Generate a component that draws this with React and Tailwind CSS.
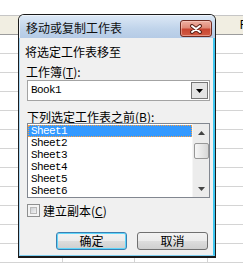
export default function App() {
  const letters = ["", "", "", "F"];
  const rows = Array.from({ length: 12 }, (_, i) => i);
  const sheets = ["Sheet1", "Sheet2", "Sheet3", "Sheet4", "Sheet5", "Sheet6"];
  return (
    <div className="relative w-[243px] h-[266px] overflow-hidden bg-white font-['Noto_Sans_CJK_SC',sans-serif] text-black">
      {/* spreadsheet background */}
      <div className="h-[15px]" />
      <div className="grid grid-cols-[63px_72px_73px_72px] h-[20px] border-y border-t-[#c6c6c6] border-b-[#9c9c9c] bg-[#f1eee2]">
        {letters.map((l, i) => (
          <div
            key={i}
            className="flex items-center justify-center border-r border-[#c6c6c6] text-[12px] leading-none font-['Liberation_Sans',sans-serif]"
          >
            {l}
          </div>
        ))}
      </div>
      {rows.map((r) => (
        <div key={r} className="grid grid-cols-[63px_72px_73px_72px] h-[19px]">
          {letters.map((l, i) => (
            <div key={i} className="border-r border-b border-[#d4d4d4]" />
          ))}
        </div>
      ))}

      {/* dialog */}
      <div className="absolute left-[18px] top-[14px] w-[198px] h-[244px] flex flex-col border border-b-2 border-[#1b1b1b] rounded-t-[6px] overflow-hidden">
        {/* title bar */}
        <div className="h-[23px] shrink-0 flex items-start justify-between pl-[6px] pr-[3px] bg-[linear-gradient(to_bottom,#dbe7f5,#bfd3ea_60%,#b5cbe6)] border-t border-l border-[#eef4fb]">
          <div className="mt-[5px] text-[12px] leading-[14px] text-[#111]">移动或复制工作表</div>
          <div className="mt-[4px] w-[32px] h-[17px] rounded-[3px] border border-[#6e2a20] bg-[linear-gradient(to_bottom,#eeb0a2_0%,#df8a78_45%,#c84531_55%,#d25c45_100%)] shadow-[inset_0_0_0_1px_rgba(255,220,210,0.45)] flex items-center justify-center">
            <svg width="14" height="10" viewBox="0 0 14 10">
              <path d="M3 2 L11 8 M11 2 L3 8" stroke="#5b2219" strokeWidth="4" strokeLinecap="round" fill="none" />
              <path d="M3 2 L11 8 M11 2 L3 8" stroke="#ffffff" strokeWidth="2" strokeLinecap="round" fill="none" />
            </svg>
          </div>
        </div>

        {/* body */}
        <div className="flex-1 flex flex-col bg-[#f0f0f0] border-l border-l-[#a8d6f3] border-r-2 border-r-[#3fc6ef] border-b border-b-[#7fcff0]">
          <div className="mt-[8px] ml-[5px] text-[12px] leading-[12px]">将选定工作表移至</div>
          <div className="mt-[8px] ml-[6px] text-[12px] leading-[12px]">
            工作簿(<span className="underline">T</span>):
          </div>

          {/* combo box */}
          <div className="mt-[2px] ml-[7px] w-[183px] h-[21px] flex items-stretch border border-[#a3a3a3] bg-white">
            <div className="flex-1 flex items-center pl-[3px] text-[11px] tracking-[-0.6px] font-['Liberation_Mono',monospace]">
              Book1
            </div>
            <div className="w-[17px] my-[1px] mr-[1px] border border-[#767676] bg-[#e4e4e4] flex items-center justify-center">
              <svg width="7" height="4" viewBox="0 0 7 4">
                <path d="M0 0 H7 L3.5 4 Z" fill="#000" />
              </svg>
            </div>
          </div>

          <div className="mt-[10px] ml-[7px] text-[12px] leading-[12px]">
            下列选定工作表之前(<span className="underline">B</span>):
          </div>

          {/* list box */}
          <div className="ml-[7px] w-[183px] h-[75px] flex border border-[#828790] bg-white">
            <div className="flex-1 flex flex-col pt-[1px]">
              {sheets.map((s, i) => (
                <div
                  key={s}
                  className={
                    i === 0
                      ? "h-[12px] leading-[12px] pl-[3px] text-[11px] tracking-[-0.6px] font-['Liberation_Mono',monospace] bg-[#3399ff] text-white outline outline-1 outline-dotted outline-[#ffa040] -outline-offset-1"
                      : "h-[12px] leading-[12px] pl-[3px] text-[11px] tracking-[-0.6px] font-['Liberation_Mono',monospace]"
                  }
                >
                  {s}
                </div>
              ))}
            </div>
            <div className="w-[17px] flex flex-col items-center bg-[#ececec] border-l border-[#f6f6f6]">
              <div className="h-[17px] w-full flex items-center justify-center">
                <svg width="7" height="4" viewBox="0 0 7 4">
                  <path d="M0 4 H7 L3.5 0 Z" fill="#444" />
                </svg>
              </div>
              <div className="mt-[2px] w-[15px] h-[16px] rounded-[2px] border border-[#979797] bg-[linear-gradient(to_right,#f6f6f6,#e4e4e4_60%,#d6d6d6)]" />
              <div className="flex-1" />
              <div className="h-[17px] w-full flex items-center justify-center">
                <svg width="7" height="4" viewBox="0 0 7 4">
                  <path d="M0 0 H7 L3.5 4 Z" fill="#444" />
                </svg>
              </div>
            </div>
          </div>

          {/* checkbox */}
          <div className="mt-[6px] ml-[7px] flex items-center h-[13px]">
            <div className="w-[13px] h-[13px] border border-[#8e8f8f] bg-[#f4f4f4] p-[2px]">
              <div className="w-full h-full border border-[#b8b8b8] bg-[linear-gradient(to_bottom_right,#cdd0d4,#f2f2f2)]" />
            </div>
            <div className="ml-[3px] text-[12px] leading-[13px]">
              建立副本(<span className="underline">C</span>)
            </div>
          </div>

          {/* buttons */}
          <div className="mt-[15px] flex justify-end gap-[10px] pr-[5px]">
            <div className="w-[71px] h-[18px] rounded-[3px] border border-[#3c7fb1] shadow-[inset_0_0_0_1px_#5fd6fb] bg-[linear-gradient(to_bottom,#f2f2f2_0%,#ebebeb_50%,#dddddd_50%,#cfcfcf_100%)] flex items-center justify-center text-[12px] leading-none">
              确定
            </div>
            <div className="w-[71px] h-[18px] rounded-[3px] border border-[#707070] bg-[linear-gradient(to_bottom,#f2f2f2_0%,#ebebeb_50%,#dddddd_50%,#cfcfcf_100%)] flex items-center justify-center text-[12px] leading-none">
              取消
            </div>
          </div>
        </div>
      </div>
    </div>
  );
}
